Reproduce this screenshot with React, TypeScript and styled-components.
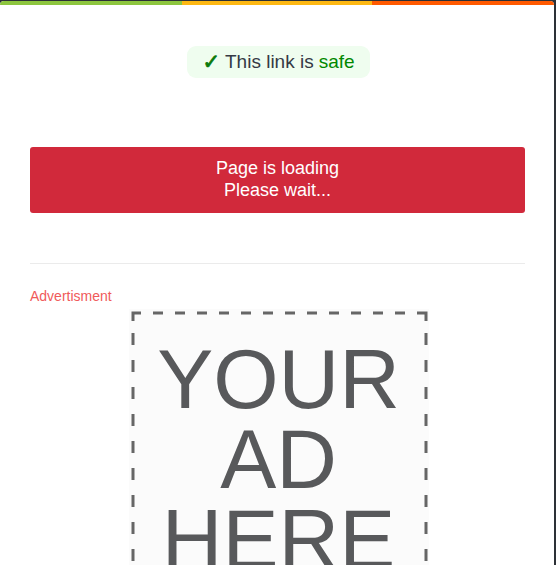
import React from "react";
import styled, { createGlobalStyle } from "styled-components";

const Global = createGlobalStyle`
  html, body { margin: 0; padding: 0; }
  body {
    background: #2d3137;
    font-family: "Liberation Sans", Arial, sans-serif;
    overflow: hidden;
  }
`;

const Card = styled.div`
  margin-top: 1px;
  width: 554px;
  height: 564px;
  background: #ffffff;
  border-radius: 4px 4px 0 0;
  overflow: hidden;
  display: flex;
  flex-direction: column;
`;

const TopBar = styled.div`
  display: flex;
  height: 4px;
  flex-shrink: 0;
`;

const BarSeg = styled.div<{ $color: string; $w: number }>`
  width: ${(p) => p.$w}px;
  background: ${(p) => p.$color};
`;

const Content = styled.div`
  padding: 0 29px 0 30px;
  display: flex;
  flex-direction: column;
`;

const BadgeRow = styled.div`
  display: flex;
  justify-content: center;
  padding-top: 41px;
  padding-left: 2px;
`;

const Badge = styled.div`
  background: #effdef;
  border-radius: 9px;
  height: 32px;
  padding: 0 15px 0 15px;
  display: flex;
  align-items: center;
  font-size: 19px;
  color: #353a45;
`;

const Check = styled.span`
  color: #0a7a0a;
  font-family: "DejaVu Sans", sans-serif;
  font-weight: bold;
  font-size: 21px;
  -webkit-text-stroke: 0.8px #0a7a0a;
  margin-right: 5px;
`;

const Safe = styled.span`
  color: #008800;
  margin-left: 5px;
`;

const LoadingButton = styled.div`
  margin-top: 69px;
  height: 66px;
  background: #d1293b;
  border-radius: 3px;
  color: #ffffff;
  font-size: 18px;
  line-height: 22px;
  display: flex;
  flex-direction: column;
  align-items: center;
  justify-content: center;
  padding-bottom: 2px;
  box-sizing: border-box;
`;

const Divider = styled.div`
  margin-top: 50px;
  height: 1px;
  background: #ebebeb;
`;

const AdLabel = styled.div`
  margin-top: 24px;
  font-size: 14px;
  line-height: 16px;
  color: #f05a5a;
`;

const AdImage = styled.div`
  position: relative;
  align-self: center;
  margin-top: 5px;
  margin-left: 2px;
  width: 300px;
  height: 300px;
  background: #fbfbfb;
  display: flex;
  flex-direction: column;
  align-items: center;
  padding-top: 30px;
  box-sizing: border-box;
`;

const DashFrame = styled.svg`
  position: absolute;
  inset: 0;
  pointer-events: none;
`;

const AdWord = styled.div`
  font-family: "Liberation Sans", Arial, sans-serif;
  font-size: 84px;
  line-height: 80px;
  color: #58595b;
`;

export default function App() {
  return (
    <>
      <Global />
      <Card>
        <TopBar>
          <BarSeg $color="#8dc63f" $w={182} />
          <BarSeg $color="#fdb813" $w={190} />
          <BarSeg $color="#ff5a00" $w={182} />
        </TopBar>
        <Content>
          <BadgeRow>
            <Badge>
              <Check>✓</Check>This link is<Safe>safe</Safe>
            </Badge>
          </BadgeRow>
          <LoadingButton>
            <span>Page is loading</span>
            <span>Please wait...</span>
          </LoadingButton>
          <Divider />
          <AdLabel>Advertisment</AdLabel>
          <AdImage>
            <DashFrame width="300" height="300" viewBox="0 0 300 300">
              <path d="M4 12 V4 H12" fill="none" stroke="#666" strokeWidth="3" />
              <line x1="24" y1="4" x2="288" y2="4" stroke="#666" strokeWidth="3" strokeDasharray="10 12" />
              <line x1="4" y1="24" x2="4" y2="300" stroke="#666" strokeWidth="3" strokeDasharray="12 15" />
              <path d="M288 4 H297 V12" fill="none" stroke="#666" strokeWidth="3" />
              <line x1="297" y1="24" x2="297" y2="300" stroke="#666" strokeWidth="3" strokeDasharray="12 15" />
            </DashFrame>
            <AdWord>YOUR</AdWord>
            <AdWord>AD</AdWord>
            <AdWord>HERE</AdWord>
          </AdImage>
        </Content>
      </Card>
    </>
  );
}
